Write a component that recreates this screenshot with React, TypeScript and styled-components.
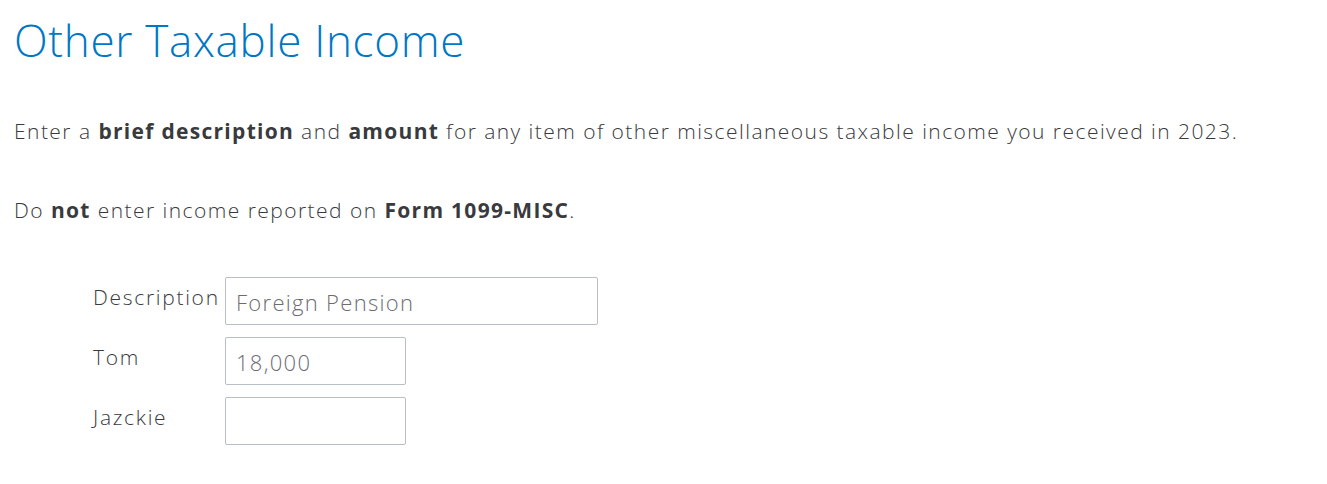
import * as React from "react";
import styled, { createGlobalStyle } from "styled-components";

const GlobalStyle = createGlobalStyle`
	html, body {
		margin: 0;
		padding: 0;
		background: #fff;
	}
	body {
		font-family: "Open Sans", "Lato", sans-serif;
		color: #393a3d;
	}
`;

const rows = [
	{ label: "Description", value: "Foreign Pension", wide: true },
	{ label: "Tom", value: "18,000", wide: false },
	{ label: "Jazckie", value: "", wide: false },
];

const App = () => {
	return (
		<Page>
			<GlobalStyle />
			<Title>Other Taxable Income</Title>
			<Paragraph>
				Enter a <strong>brief description</strong> and <strong>amount</strong> for any item of other
				miscellaneous taxable income you received in 2023.
			</Paragraph>
			<Paragraph>
				Do <strong>not</strong> enter income reported on <strong>Form 1099-MISC</strong>.
			</Paragraph>
			<Form>
				{rows.map(({ label, value, wide }) => (
					<Row key={label}>
						<Label>{label}</Label>
						<Field wide={wide} defaultValue={value} readOnly />
					</Row>
				))}
			</Form>
		</Page>
	);
};

const Page = styled.main`
	padding: 12px 14px 0;
`;

const Title = styled.h1`
	margin: 0;
	font-family: "Open Sans", sans-serif;
	font-weight: 300;
	font-size: 44px;
	line-height: 56px;
	letter-spacing: 0.7px;
	color: #0077c5;
`;

const Paragraph = styled.p`
	margin: 0;
	font-size: 21px;
	font-weight: 300;
	line-height: 26px;
	letter-spacing: 1.45px;
	color: #393a3d;
	&:first-of-type {
		margin-top: 50px;
	}
	& + & {
		margin-top: 53px;
	}
	strong {
		font-weight: 700;
		letter-spacing: 1.3px;
	}
`;

const Form = styled.div`
	display: flex;
	flex-direction: column;
	gap: 12px;
	margin-top: 54px;
	padding-left: 79px;
`;

const Row = styled.div`
	display: flex;
	align-items: flex-start;
`;

const Label = styled.label`
	width: 132px;
	padding-top: 6px;
	font-size: 21px;
	font-weight: 300;
	line-height: 28px;
	letter-spacing: 1.7px;
	color: #393a3d;
`;

const Field = styled.input<{ wide: boolean }>`
	box-sizing: border-box;
	width: ${({ wide }) => (wide ? "373px" : "181px")};
	height: 48px;
	padding: 2px 10px 0;
	border: 1px solid #babec5;
	border-radius: 2px;
	font-family: "Open Sans", sans-serif;
	font-size: 22px;
	font-weight: 300;
	letter-spacing: 1.3px;
	color: #6b6c72;
	background: #fff;
	outline: none;
`;

export default App;
